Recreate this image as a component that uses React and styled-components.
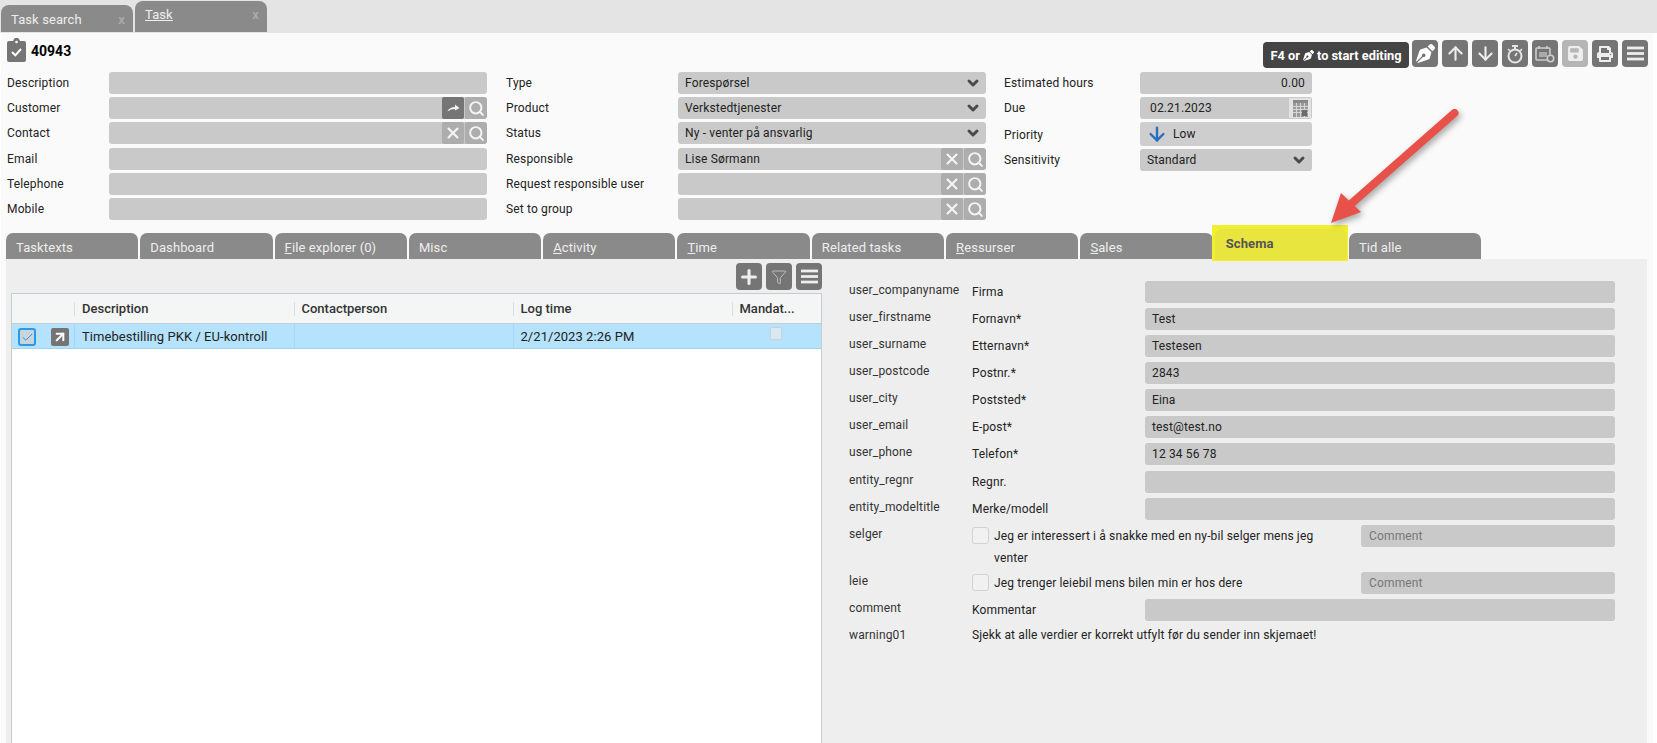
import React from 'react';
import styled, { createGlobalStyle } from 'styled-components';
import { FaPenNib, FaSave, FaPrint } from 'react-icons/fa';
import { ArrowUp, ArrowDown, ArrowUpRight, ChevronDown, Check, Plus, Search, X, Funnel } from 'lucide-react';

const Global = createGlobalStyle`
  html, body { margin: 0; padding: 0; height: 743px; overflow: hidden; background: #fff; }
  body { font-family: Roboto, "Liberation Sans", Arial, sans-serif; font-size: 12px; color: #222; }
  * { box-sizing: border-box; }
`;

const Page = styled.div`
  position: relative; width: 1657px; height: 743px; display: flex; flex-direction: column; overflow: hidden;
`;
const WindowTabs = styled.div`
  height: 33px; flex: none; background: #e4e4e4; padding: 0 0 1px 1px; display: flex; align-items: flex-end; gap: 2px;
`;
const WindowTab = styled.div`
  width: 132px; height: ${p => (p.$active ? 31 : 27)}px; background: #8a8a8a; border-radius: 8px 8px 0 0;
  color: #eee; font-size: 13px; letter-spacing: 0.1px; display: flex; justify-content: space-between; padding: ${p => (p.$active ? '0 8px 5px 10px' : '2px 8px 0 10px')};
  align-items: center;
  & > span:first-child { text-decoration: ${p => (p.$active ? 'underline' : 'none')}; }
`;
const CloseX = styled.span`
  color: #a9a9a9; font-weight: 700; font-size: 13px;
`;
const Main = styled.div`
  flex: 1; min-height: 0; margin-left: 1px; width: 1652px; background: #fafafa; display: flex; flex-direction: column;
`;
const Header = styled.div`
  height: 39px; flex: none; display: flex; justify-content: space-between; padding: 5px 5px 0 6px;
`;
const Title = styled.div`
  display: flex; align-items: center; gap: 5px; height: 24px; font-size: 14px; font-weight: 700; color: #000;
  span { padding-top: 1px; }
`;
const Toolbar = styled.div`
  display: flex; gap: 4px; padding-top: 2px; align-items: flex-start;
`;
const Note = styled.div`
  width: 146px; height: 26px; margin: 2px -1px 0 0; background: #444; border-radius: 4px; color: #fff; font-size: 12.8px; font-weight: 700;
  display: flex; align-items: center; justify-content: center; gap: 3px; white-space: nowrap;
`;
const ToolBtn = styled.div`
  width: 26px; height: 27px; background: ${p => (p.$off ? '#b5b5b5' : '#757575')}; border-radius: 4px; color: #eee;
  display: flex; align-items: center; justify-content: center; flex: none;
`;
const Form = styled.div`
  display: flex; padding-left: 6px; flex: none; height: 148px;
`;
const Column = styled.div`
  width: ${p => p.$w}px; margin-right: ${p => p.$gap}px; display: flex; flex-direction: column;
`;
const Row = styled.div`
  display: grid; grid-template-columns: ${p => p.$label}px 1fr; height: ${p => p.$h || 22}px; margin-bottom: ${p => p.$mb ?? 3}px;
`;
const RowLabel = styled.div`
  line-height: 22px; font-size: 12px; color: #222; letter-spacing: 0.15px; white-space: nowrap; padding-top: ${p => p.$drop || 0}px;
`;
const Field = styled.div`
  position: relative; background: ${p => (p.$light ? '#cecece' : '#c9c9c9')}; border-radius: 3px; display: flex; align-items: center; overflow: hidden;
  padding-left: ${p => p.$pad ?? 7}px; font-size: 12px; color: #222; letter-spacing: 0.15px; justify-content: ${p => (p.$right ? 'flex-end' : 'flex-start')};
  padding-right: ${p => (p.$right ? 7 : 0)}px; white-space: nowrap;
`;
const FieldBtns = styled.div`
  margin-left: auto; display: flex; gap: 1px; height: 100%;
`;
const FieldBtn = styled.div`
  width: 22px; height: 100%; background: ${p => (p.$dark ? '#757575' : '#adadad')}; color: #f4f4f4; display: flex; align-items: center; justify-content: center; border-radius: 2px;
`;
const SelectArrow = styled.div`
  margin-left: auto; width: 26px; display: flex; justify-content: center; color: #4a4a4a;
`;
const DateBtn = styled.div`
  margin-left: auto; width: 24px; height: 100%; background: #e2e2e2; display: flex; align-items: center; justify-content: center; border: 1px solid #c9c9c9;
`;
const Tabs = styled.div`
  flex: none; height: 26px; margin: 13px 0 0 5px; display: flex; gap: 2px; align-items: flex-end; position: relative; z-index: 1;
`;
const Tab = styled.div`
  width: 132.3px; height: ${p => (p.$hi ? 31 : 26)}px; background: ${p => (p.$hi ? '#e8e63e' : '#8a8a8a')}; border-radius: 7px 7px 0 0; flex: none;
  color: ${p => (p.$hi ? '#555' : '#eee')}; font-size: 13px; letter-spacing: 0.1px; font-weight: ${p => (p.$hi ? 700 : 400)}; padding: ${p => (p.$hi ? '0 0 3px 11px' : '3px 0 0 10px')}; display: flex; align-items: center;
  u { text-decoration: underline; }
`;
const TabHighlight = styled.div`
  flex: none; margin: 0 -1px -2px -3px; padding: 4px 1px 1px 3px; background: #f2ef30;
`;
const Panel = styled.div`
  flex: 1; min-height: 0; margin-left: 5px; width: 1641px; background: #eee; display: flex; padding: 4px 0 0 5px;
`;
const Left = styled.div`
  width: 811px; flex: none; display: flex; flex-direction: column;
`;
const ListTools = styled.div`
  display: flex; justify-content: flex-end; gap: 4px; margin-bottom: 3px; flex: none;
`;
const Table = styled.div`
  flex: 1; background: #fff; border: 1px solid #c4cdd0; border-bottom: 0;
`;
const TableHead = styled.div`
  height: 30px; background: #f4f6f6; border-bottom: 1px solid #c4cdd0; display: grid; grid-template-columns: 62px 219.5px 219px 219px 88px;
`;
const HeadCell = styled.div`
  display: flex; align-items: center; font-weight: 500; font-size: 13px; color: #333; white-space: nowrap;
  &:not(:first-child)::before { content: ''; width: 1px; height: 14px; background: #dcdfe0; margin-right: 7px; flex: none; }
`;
const TableRow = styled.div`
  height: 25px; background: #b5e2fc; border-bottom: 1px solid #a5d3ee; display: grid; grid-template-columns: 62px 219.5px 219px 219px 88px;
`;
const Cell = styled.div`
  display: flex; align-items: center; font-size: 13px; letter-spacing: 0.05px; color: #222; white-space: nowrap; padding-left: ${p => (p.$center ? 0 : 7)}px;
  border-left: 1px solid ${p => (p.$first ? 'transparent' : '#a9d7f2')}; justify-content: ${p => (p.$center ? 'center' : 'flex-start')};
`;
const RowChecks = styled.div`
  display: flex; align-items: center; gap: 15px; padding: 2px 0 0 6px;
`;
const RowCheck = styled.div`
  width: 18px; height: 18px; background: #c9d5dc; border: 2px solid #2b9ae6; border-radius: 3px; color: #2b8fe0; display: flex; align-items: center; justify-content: center;
`;
const OpenBtn = styled.div`
  width: 18px; height: 18px; background: #757575; border-radius: 2px; color: #fff; display: flex; align-items: center; justify-content: center;
`;
const MiniCheck = styled.div`
  width: 12px; height: 13px; background: #dbe8f0; border: 1px solid #c3d3dd; border-radius: 2px; margin: -5px 0 0 0;
`;
const Schema = styled.div`
  margin: 18px 0 0 27px; width: 766px; display: flex; flex-direction: column;
`;
const SchemaRow = styled.div`
  display: grid; grid-template-columns: 123px 1fr; margin-bottom: ${p => p.$mb ?? 5}px; margin-top: ${p => p.$mt || 0}px; min-height: 22px;
`;
const SchemaName = styled.div`
  line-height: 18px; color: #333; font-size: 12px; letter-spacing: 0.15px;
`;
const SchemaBody = styled.div`
  display: grid; grid-template-columns: 173px 1fr;
`;
const SchemaLabel = styled.div`
  line-height: ${p => p.$lh || 22}px; color: #222; white-space: nowrap; letter-spacing: 0.15px;
`;
const CheckBody = styled.div`
  display: flex; align-items: flex-start;
`;
const Box = styled.div`
  width: 17px; height: 17px; flex: none; margin: 2px 5px 0 0; background: #f1f1f1; border: 1px solid #d2d2d2; border-radius: 3px;
`;
const CheckText = styled.div`
  width: 350px; line-height: 22px; color: #222; letter-spacing: 0.15px;
`;
const CommentField = styled(Field)`
  margin-left: auto; width: 254px; height: 22px; color: #777; padding-left: 8px;
`;
const Annotation = styled.svg`
  position: absolute; left: 1320px; top: 100px; width: 150px; height: 135px; z-index: 5; filter: drop-shadow(2px 3px 3px rgba(0,0,0,.35));
`;
const SchemaField = styled(Field)`
  height: 22px;
`;
const LowText = styled.span`
  margin-left: 5px;
`;

const Bars = ({ size = 16, w = 2.6 }) => (
  <svg width={size} height={size} viewBox="0 0 16 16"><g fill="currentColor">
    <rect x="0" y="1.5" width="16" height={w} /><rect x="0" y={8 - w / 2} width="16" height={w} /><rect x="0" y={14.5 - w} width="16" height={w} />
  </g></svg>
);
const Clipboard = () => (
  <svg width="19" height="24" viewBox="0 0 19 24">
    <path fill="#757575" d="M2 3h4l1-2a3 3 0 0 1 5 0l1 2h4a2 2 0 0 1 2 2v17a2 2 0 0 1-2 2H2a2 2 0 0 1-2-2V5a2 2 0 0 1 2-2z" />
    <circle cx="9.5" cy="4" r="1.3" fill="#fafafa" />
    <path d="M5 14l3.3 3.3L14 11" fill="none" stroke="#fff" strokeWidth="2" />
  </svg>
);
const Stopwatch = () => (
  <svg width="18" height="20" viewBox="0 0 18 20" fill="none" stroke="#e6e6e6">
    <circle cx="9" cy="12" r="6.5" strokeWidth="2" />
    <path d="M6 2h6" strokeWidth="2" /><path d="M9 2v3" strokeWidth="2" />
    <path d="M2 5l2 2M16 5l-2 2" strokeWidth="1.6" /><path d="M9 12l2-3" strokeWidth="1.6" />
  </svg>
);
const CalendarClock = () => (
  <svg width="20" height="18" viewBox="0 0 20 18">
    <rect x="1" y="3" width="14" height="12" rx="1" fill="none" stroke="#ccc" strokeWidth="1.6" />
    <path d="M4 1v3M12 1v3" stroke="#ccc" strokeWidth="1.6" />
    <rect x="4" y="7" width="8" height="5" fill="#aaa" />
    <circle cx="15.5" cy="13.5" r="3.2" fill="#757575" stroke="#ccc" strokeWidth="1.6" />
  </svg>
);
const CalendarGrid = () => (
  <svg width="15" height="17" viewBox="0 0 15 17">
    <rect width="15" height="17" fill="#9a9a9a" />
    <rect y="0" width="15" height="3" fill="#8a8a8a" />
    <path d="M0 6.5h15M0 9.5h15M0 12.5h15M3.5 3v14M7.5 3v14M11.5 3v14" stroke="#d6d6d6" strokeWidth="1" />
    <rect x="9" y="10" width="5" height="6" fill="#6c6c6c" />
  </svg>
);
const GoArrow = () => (
  <svg width="13" height="8" viewBox="0 0 13 8">
    <path fill="currentColor" d="M0.5 7.5C1.5 4.5 4.5 3 8 3V0.5L12.5 4 8 6.5V5C5 5 3 5.8 0.5 7.5z" />
  </svg>
);

const ClearSearch = ({ first }) => (
  <FieldBtns>
    <FieldBtn $dark={first}>{first ? <GoArrow /> : <X size={18} strokeWidth={2.8} />}</FieldBtn>
    <FieldBtn><Search size={17} strokeWidth={2.8} /></FieldBtn>
  </FieldBtns>
);
const Arrow = () => <SelectArrow><ChevronDown size={16} strokeWidth={4.4} /></SelectArrow>;

const col1 = [
  ['Description', null], ['Customer', 'go'], ['Contact', 'x'], ['Email', null], ['Telephone', null], ['Mobile', null],
];
const col2 = [
  ['Type', 'Forespørsel', 's'], ['Product', 'Verkstedtjenester', 's'], ['Status', 'Ny - venter på ansvarlig', 's'],
  ['Responsible', 'Lise Sørmann', 'x'], ['Request responsible user', '', 'x'], ['Set to group', '', 'x'],
];
const tabs = [
  ['', 'Tasktexts'], ['', 'Dashboard'], ['F', 'ile explorer (0)'], ['', 'Misc'], ['A', 'ctivity'], ['T', 'ime'],
  ['', 'Related tasks'], ['R', 'essurser'], ['S', 'ales'],
];
const fields1 = [
  ['user_companyname', 'Firma', ''], ['user_firstname', 'Fornavn*', 'Test'], ['user_surname', 'Etternavn*', 'Testesen'],
  ['user_postcode', 'Postnr.*', '2843'], ['user_city', 'Poststed*', 'Eina'], ['user_email', 'E-post*', 'test@test.no'],
  ['user_phone', 'Telefon*', '12 34 56 78'],
];
const fields2 = [['entity_regnr', 'Regnr.', ''], ['entity_modeltitle', 'Merke/modell', '']];

export default function App() {
  return (
    <Page>
      <Global />
      <WindowTabs>
        <WindowTab><span>Task search</span><CloseX>x</CloseX></WindowTab>
        <WindowTab $active><span>Task</span><CloseX>x</CloseX></WindowTab>
      </WindowTabs>
      <Main>
        <Header>
          <Title><Clipboard /><span>40943</span></Title>
          <Toolbar>
            <Note>F4 or <FaPenNib size={11} /> to start editing</Note>
            <ToolBtn><FaPenNib size={19} color="#fff" /></ToolBtn>
            <ToolBtn><ArrowUp size={21} strokeWidth={2.4} /></ToolBtn>
            <ToolBtn><ArrowDown size={21} strokeWidth={2.4} /></ToolBtn>
            <ToolBtn><Stopwatch /></ToolBtn>
            <ToolBtn><CalendarClock /></ToolBtn>
            <ToolBtn $off><FaSave size={17} /></ToolBtn>
            <ToolBtn><FaPrint size={16} /></ToolBtn>
            <ToolBtn><Bars size={17} /></ToolBtn>
          </Toolbar>
        </Header>
        <Form>
          <Column $w={480} $gap={19}>
            {col1.map(([label, kind], i) => (
              <Row key={label} $label={102} $mb={i === 2 ? 4 : 3}>
                <RowLabel>{label}</RowLabel>
                <Field>{kind && <ClearSearch first={kind === 'go'} />}</Field>
              </Row>
            ))}
          </Column>
          <Column $w={480} $gap={18}>
            {col2.map(([label, value, kind], i) => (
              <Row key={label} $label={172} $mb={i === 2 ? 4 : 3}>
                <RowLabel>{label}</RowLabel>
                <Field>{value}{kind === 's' ? <Arrow /> : <ClearSearch />}</Field>
              </Row>
            ))}
          </Column>
          <Column $w={308} $gap={0}>
            <Row $label={136}><RowLabel>Estimated hours</RowLabel><Field $right>0.00</Field></Row>
            <Row $label={136}><RowLabel>Due</RowLabel><Field $pad={10}>02.21.2023<DateBtn><CalendarGrid /></DateBtn></Field></Row>
            <Row $label={136} $h={24}>
              <RowLabel $drop={2}>Priority</RowLabel>
              <Field $light $pad={6}><ArrowDown size={22} color="#2a6fbb" strokeWidth={2.6} /><LowText>Low</LowText></Field>
            </Row>
            <Row $label={136}><RowLabel>Sensitivity</RowLabel><Field>Standard<Arrow /></Field></Row>
          </Column>
        </Form>
        <Tabs>
          {tabs.map(([u, rest]) => <Tab key={rest}>{u && <u>{u}</u>}{rest}</Tab>)}
          <TabHighlight><Tab $hi>Schema</Tab></TabHighlight>
          <Tab>Tid alle</Tab>
        </Tabs>
        <Panel>
          <Left>
            <ListTools>
              <ToolBtn><Plus size={22} strokeWidth={3.4} /></ToolBtn>
              <ToolBtn><Funnel size={16} strokeWidth={1.2} color="#cfcfcf" /></ToolBtn>
              <ToolBtn><Bars size={17} /></ToolBtn>
            </ListTools>
            <Table>
              <TableHead>
                <HeadCell />
                <HeadCell>Description</HeadCell>
                <HeadCell>Contactperson</HeadCell>
                <HeadCell>Log time</HeadCell>
                <HeadCell>Mandat...</HeadCell>
              </TableHead>
              <TableRow>
                <RowChecks>
                  <RowCheck><Check size={13} strokeWidth={1.8} /></RowCheck>
                  <OpenBtn><ArrowUpRight size={16} strokeWidth={3} /></OpenBtn>
                </RowChecks>
                <Cell>Timebestilling PKK / EU-kontroll</Cell>
                <Cell />
                <Cell>2/21/2023 2:26 PM</Cell>
                <Cell $center $first><MiniCheck /></Cell>
              </TableRow>
            </Table>
          </Left>
          <Schema>
            {fields1.map(([name, label, value]) => (
              <SchemaRow key={name}>
                <SchemaName>{name}</SchemaName>
                <SchemaBody><SchemaLabel>{label}</SchemaLabel><SchemaField>{value}</SchemaField></SchemaBody>
              </SchemaRow>
            ))}
            {fields2.map(([name, label, value], i) => (
              <SchemaRow key={name} $mt={i === 0 ? 1 : 0}>
                <SchemaName>{name}</SchemaName>
                <SchemaBody><SchemaLabel>{label}</SchemaLabel><SchemaField>{value}</SchemaField></SchemaBody>
              </SchemaRow>
            ))}
            <SchemaRow $mb={3}>
              <SchemaName>selger</SchemaName>
              <CheckBody>
                <Box />
                <CheckText>Jeg er interessert i å snakke med en ny-bil selger mens jeg venter</CheckText>
                <CommentField>Comment</CommentField>
              </CheckBody>
            </SchemaRow>
            <SchemaRow>
              <SchemaName>leie</SchemaName>
              <CheckBody>
                <Box />
                <CheckText>Jeg trenger leiebil mens bilen min er hos dere</CheckText>
                <CommentField>Comment</CommentField>
              </CheckBody>
            </SchemaRow>
            <SchemaRow>
              <SchemaName>comment</SchemaName>
              <SchemaBody><SchemaLabel>Kommentar</SchemaLabel><SchemaField /></SchemaBody>
            </SchemaRow>
            <SchemaRow>
              <SchemaName>warning01</SchemaName>
              <SchemaLabel $lh={18}>Sjekk at alle verdier er korrekt utfylt før du sender inn skjemaet!</SchemaLabel>
            </SchemaRow>
          </Schema>
        </Panel>
      </Main>
      <Annotation viewBox="0 0 150 135">
        <path d="M134.5 13 L32 103" stroke="#e8504a" strokeWidth="8" strokeLinecap="round" fill="none" />
        <polygon points="11,123 21,93 41,112" fill="#e8504a" />
      </Annotation>
    </Page>
  );
}
